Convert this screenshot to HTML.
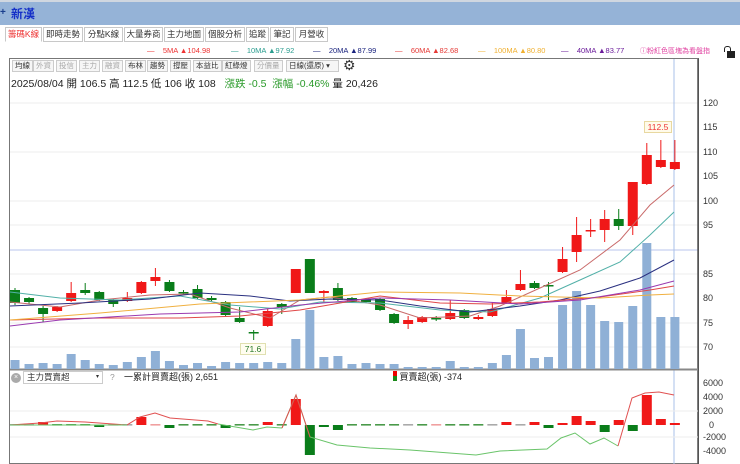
<!DOCTYPE html>
<html><head><meta charset="utf-8">
<style>
*{margin:0;padding:0;box-sizing:border-box}
body{width:740px;height:464px;overflow:hidden;background:#fff;font-family:"Liberation Sans","Noto Sans CJK TC",sans-serif;position:relative}
.abs{position:absolute;white-space:nowrap}
#title{left:0;top:0;width:740px;height:25px;background:#95b3d7;border-top:2px solid #d0d7e0}
.tab{position:absolute;top:27px;height:15px;border:1px solid #c8c8c8;font-size:8.5px;line-height:13px;text-align:center;color:#333;background:#fff;white-space:nowrap;overflow:hidden}
.btn{position:absolute;top:60px;height:12px;border:1px solid #ccc;font-size:7.5px;line-height:10px;padding:0 2px;color:#333;background:#f6f6f6;white-space:nowrap}
.btn.g{color:#aaa}
.lg{position:absolute;top:46px;font-size:7.5px;white-space:nowrap}
.ax{position:absolute;left:703px;font-size:9px;color:#333}
</style></head><body>
<div id="title" class="abs"></div>
<div class="abs" style="left:0;top:7px;font-size:10px;color:#1a3e8c;font-weight:bold">+</div>
<div class="abs" style="left:11px;top:5px;font-size:12px;color:#1530c8;font-weight:bold">新漢</div>

<div class="tab" style="left:5px;width:37px;color:#e33;border-bottom-color:#fff">籌碼K線</div>
<div class="tab" style="left:43px;width:40px">即時走勢</div>
<div class="tab" style="left:84px;width:39px">分點K線</div>
<div class="tab" style="left:124px;width:39px">大量券商</div>
<div class="tab" style="left:164px;width:40px">主力地圖</div>
<div class="tab" style="left:205px;width:40px">個股分析</div>
<div class="tab" style="left:246px;width:23px">追蹤</div>
<div class="tab" style="left:270px;width:24px">筆記</div>
<div class="tab" style="left:295px;width:33px">月營收</div>

<div class="lg" style="left:147px;color:#e33">—&nbsp;&nbsp;&nbsp;&nbsp;5MA ▲104.98</div>
<div class="lg" style="left:231px;color:#2a9d8f">—&nbsp;&nbsp;&nbsp;&nbsp;10MA ▲97.92</div>
<div class="lg" style="left:313px;color:#1a237e">—&nbsp;&nbsp;&nbsp;&nbsp;20MA ▲87.99</div>
<div class="lg" style="left:395px;color:#e53935">—&nbsp;&nbsp;&nbsp;&nbsp;60MA ▲82.68</div>
<div class="lg" style="left:478px;color:#f0b030">—&nbsp;&nbsp;&nbsp;&nbsp;100MA ▲80.80</div>
<div class="lg" style="left:561px;color:#6a1b9a">—&nbsp;&nbsp;&nbsp;&nbsp;40MA ▲83.77</div>
<div class="lg" style="left:640px;color:#e040a0;font-size:7px">ⓘ粉紅色區塊為看盤指</div>
<div class="abs" style="left:724px;top:46px;width:7px;height:6px;border:1.5px solid #222;border-bottom:none;border-radius:3px 3px 0 0"></div>
<div class="abs" style="left:727px;top:51px;width:8px;height:7px;background:#222"></div>

<div class="abs" style="left:9px;top:58px;width:690px;height:406px;border:1px solid #777;border-right:1.5px solid #555"></div>

<div class="btn" style="left:12px">均線</div>
<div class="btn g" style="left:33px">外資</div>
<div class="btn g" style="left:56px">投信</div>
<div class="btn g" style="left:79px">主力</div>
<div class="btn g" style="left:102px">融資</div>
<div class="btn" style="left:125px">布林</div>
<div class="btn" style="left:147px">趨勢</div>
<div class="btn" style="left:170px">撐壓</div>
<div class="btn" style="left:193px">本益比</div>
<div class="btn" style="left:222px">紅綠燈</div>
<div class="btn g" style="left:254px">分價量</div>
<div class="btn" style="left:286px;width:53px">日線(還原) ▾</div>
<div class="abs" style="left:343px;top:57px;font-size:14px;color:#333">⚙</div>
<div class="abs" style="left:11px;top:76px;font-size:10.5px;color:#222">2025/08/04 開 106.5 高 112.5 低 106 收 108 <span style="color:#2a9a2a">&nbsp;&nbsp;漲跌 -0.5 &nbsp;漲幅 -0.46%</span> 量 20,426</div>

<svg class="abs" style="left:0;top:0" width="740" height="464" id="sv"></svg>

<div class="ax" style="top:98px">120</div>
<div class="ax" style="top:122px">115</div>
<div class="ax" style="top:147px">110</div>
<div class="ax" style="top:171px">105</div>
<div class="ax" style="top:196px">100</div>
<div class="ax" style="top:220px">95</div>
<div class="ax" style="top:269px">85</div>
<div class="ax" style="top:293px">80</div>
<div class="ax" style="top:318px">75</div>
<div class="ax" style="top:342px">70</div>

<div class="abs" style="left:644px;top:121px;width:28px;height:12px;border:1px solid #e8d8a0;background:#fffbea;font-size:8.5px;color:#e33;text-align:center;line-height:10px">112.5</div>
<div class="abs" style="left:240px;top:343px;width:26px;height:12px;border:1px solid #e0e0b0;background:#fffdf0;font-size:8.5px;color:#2a7a2a;text-align:center;line-height:10px">71.6</div>

<div class="abs" style="left:11px;top:373px;width:10px;height:10px;border-radius:50%;background:#aaa;color:#fff;font-size:7px;text-align:center;line-height:10px">×</div>
<div class="abs" style="left:23px;top:371px;width:80px;height:13px;border:1px solid #ccc;font-size:8.5px;line-height:11px;padding-left:3px;color:#333;background:#fff">主力買賣超<span style="position:absolute;right:3px;font-size:6px">▾</span></div>
<div class="abs" style="left:110px;top:372px;font-size:8.5px;color:#999">?</div>
<div class="abs" style="left:124px;top:370px;font-size:9px;color:#222">一累計買賣超(張) 2,651</div>
<div class="abs" style="left:393px;top:370px;font-size:9px;color:#222"><span style="display:inline-block;width:4px;height:10px;background:linear-gradient(#e00 50%,#1a8a1a 50%);vertical-align:-1px"></span> 買賣超(張) -374</div>
<div class="ax" style="top:378px">6000</div>
<div class="ax" style="top:392px">4000</div>
<div class="ax" style="top:406px">2000</div>
<div class="ax" style="top:420px;left:709px">0</div>
<div class="ax" style="top:432px">-2000</div>
<div class="ax" style="top:446px">-4000</div>

<script>
var s='';
function r(x,y,w,h,c){s+='<rect x="'+x+'" y="'+y+'" width="'+w+'" height="'+h+'" fill="'+c+'"/>';}
function l(x1,y1,x2,y2,c,w){s+='<line x1="'+x1+'" y1="'+y1+'" x2="'+x2+'" y2="'+y2+'" stroke="'+c+'" stroke-width="'+(w||1)+'"/>';}
function pl(p,c,w){s+='<polyline points="'+p+'" fill="none" stroke="'+c+'" stroke-width="'+(w||1)+'"/>';}
[103,152,201,225,274,323,347].forEach(function(y){l(10,y,698,y,'#eeeeee');});
l(10,250,698,250,'#b8c4ec');
l(674,59,674,464,'#a8c0e8');
l(698,59,698,464,'#555',1.5);
l(10,369,698,369,'#888');
var v=[360,364,363,364,354,360,364,365,362,357,351,361,365,363,366,362,363,363,362,363,339,310,357,356,364,363,364,364,367,367,367,361,367,367,363,355,329,358,357,305,291,305,321,322,306,243,317,317];
function X(i){return 15+i*14.04;}
v.forEach(function(t,i){r(X(i)-4.5,t,9,369-t,'#8fb0d6');});
var c=[['g',290,303,288,305],['g',298,302,297,304],['g',308,314,306,322],['r',307,311,306,312],['r',293,301,282,302],['g',290,293,283,295],['g',292,300,291,301],['g',300,304,299,307],['r',298,301,292,302],['r',282,293,281,294],['r',277,281,268,286],['g',282,291,280,292],['g',292,293,290,295],['g',289,298,285,299],['g',298,300,296,301],['g',302,315,301,316],['g',318,322,307,323],['g',332,333,330,340],['r',311,326,308,327],['g',304,307,303,314],['r',269,293,269,293],['g',259,293,259,293],['r',291,293,290,302],['g',288,300,283,301],['g',298,302,297,303],['g',299,302,298,303],
['g',299,310,298,311],['g',314,323,313,324],['r',320,324,316,329],['r',317,322,316,323],['g',318,319,316,321],['r',313,319,300,320],['g',310,318,309,319],['r',317,319,315,320],['r',309,316,302,317],['r',297,303,290,304],['r',284,290,270,291],['g',283,288,281,289],['g',285,286,282,300],['r',259,272,247,273],['r',235,252,217,262],['r',230,231,219,237],['r',219,230,210,242],['g',219,226,209,230],['r',182,226,182,235],['r',155,184,143,185],['r',160,167,140,168],['r',162,169,140,170]];
c.forEach(function(d,i){var x=X(i),col=d[0]=='r'?'#f01818':'#0a7d1a';l(x,d[3],x,d[4],col);r(x-5,d[1],10,Math.max(1.5,d[2]-d[1]),col);});
pl('10,302 60,307 100,300 150,295 190,294 230,308 270,318 300,300 330,297 380,305 420,318 470,316 500,306 540,288 580,270 620,240 650,205 674,185','#c96a6a');
pl('10,292 60,298 120,300 180,296 230,305 280,309 320,302 380,303 440,310 490,312 540,298 580,280 620,262 650,235 674,212','#52b0a8');
pl('10,306 80,303 150,299 200,293 250,296 290,301 330,299 380,300 420,306 470,312 520,306 560,300 600,291 640,278 674,260','#2a3080');
pl('10,320 100,318 180,318 240,316 300,310 380,296 440,303 490,304 540,302 600,297 650,290 674,286','#e04848');
pl('10,320 100,313 200,304 300,300 380,292 460,293 520,296 600,298 650,295 674,294','#f0b040');
pl('10,326 60,320 160,314 240,312 300,305 380,298 450,300 520,304 580,300 640,290 674,281','#9a3ab0');
l(10,370,698,370,'#888');
[411,437].forEach(function(y){l(10,y,698,y,'#eee');});
var lb=[0,0,3,-1,-1,-1,-2,0,0,8,1,-3,-1,-1,-1,-3,-1,-1,3,-1,26,-30,-2,-5,-1,-1,-1,-1,0,-1,1,-1,-1,-1,0,3,0,3,-3,2,9,4,-7,5,-6,30,6,2,-3];
lb.forEach(function(h,i){if(i>47)return;var x=X(i);
 if(Math.abs(h)<=1){r(x-5,424,10,1.6,h>0?'#f0a0a0':(h<0?'#4a9a4a':'#aaa'));}
 else if(h>0)r(x-5,425-h,10,h,'#f01818');else r(x-5,425,10,-h,'#0a7d1a');});
pl('10,425 40,423 57,421 85,422 127,425 140,417 155,413 170,418 208,421 218,424','#e05050');
pl('10,425 127,425','#6ac46a');
pl('218,424 253,430 267,427 282,428','#6ac46a');
pl('282,428 296,395 310,437 337,445 370,448 410,450 476,455 500,451 547,449 561,438 575,433 590,444 604,438 618,446','#6ac46a');
pl('282,428 296,395 310,437','#e05050');
pl('618,446 632,398 645,393 659,392 674,395','#e05050');
document.getElementById('sv').innerHTML=s;
</script>
</body></html>
